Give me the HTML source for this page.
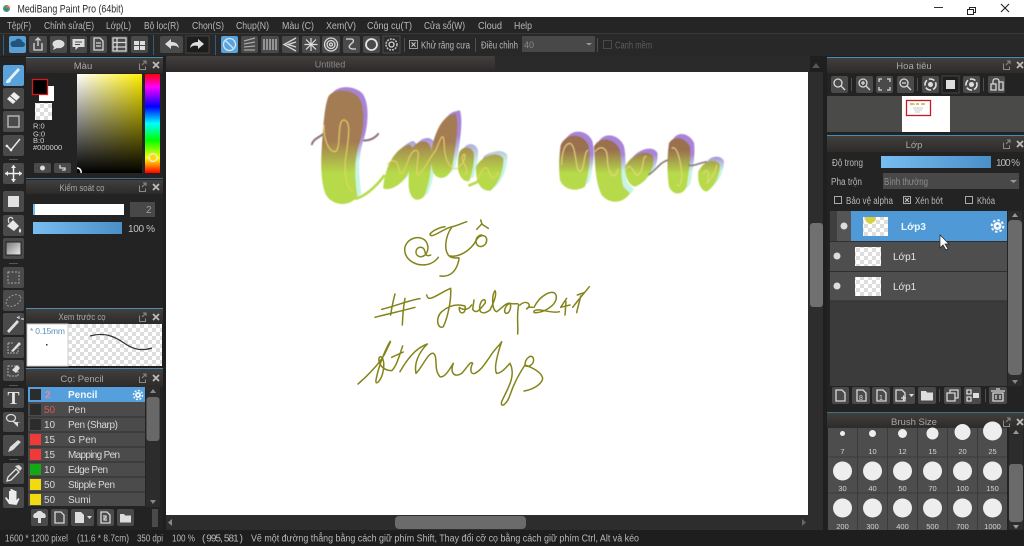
<!DOCTYPE html>
<html><head><meta charset="utf-8"><title>MediBang Paint Pro</title>
<style>
html,body{margin:0;padding:0;background:#1f1f1f;width:1024px;height:546px;overflow:hidden}
svg{display:block;filter:blur(.35px)}
text{font-family:"Liberation Sans","Noto Sans CJK SC",sans-serif;font-size:10px;fill:#b8b8b8}
.b{fill:#4a4a4a}
.i{fill:none;stroke:#d8d8d8;stroke-width:1.3}
.w{fill:#dedede}
.h{fill:#a8a8a8;text-anchor:middle;font-size:9.5px}
.r{fill:#d0d0d0;font-size:10px}
.s{fill:#d4d4d4;font-size:7.5px;text-anchor:middle}
.sep{fill:#4f4f4f}
</style></head><body>
<svg width="1024" height="546" viewBox="0 0 1024 546" xmlns="http://www.w3.org/2000/svg">
<defs>
<linearGradient id="hd" x1="0" y1="0" x2="0" y2="1"><stop offset="0" stop-color="#423f3d"/><stop offset="1" stop-color="#2d2b2a"/></linearGradient>
<linearGradient id="blue" x1="0" y1="0" x2="1" y2="0"><stop offset="0" stop-color="#77bdf0"/><stop offset="1" stop-color="#4a90c8"/></linearGradient>
<linearGradient id="sv1" x1="0" y1="0" x2="1" y2="0"><stop offset="0" stop-color="#fff"/><stop offset="1" stop-color="#ffee00"/></linearGradient>
<linearGradient id="sv2" x1="0" y1="0" x2="0" y2="1"><stop offset="0" stop-color="#000" stop-opacity="0"/><stop offset="1" stop-color="#000"/></linearGradient>
<linearGradient id="hue" x1="0" y1="0" x2="0" y2="1"><stop offset="0" stop-color="#f00"/><stop offset=".13" stop-color="#f0f"/><stop offset=".33" stop-color="#00f"/><stop offset=".5" stop-color="#0ff"/><stop offset=".67" stop-color="#0f0"/><stop offset=".85" stop-color="#ff0"/><stop offset="1" stop-color="#f00"/></linearGradient>
<linearGradient id="grad" x1="0" y1="0" x2="1" y2="1"><stop offset="0" stop-color="#777"/><stop offset="1" stop-color="#eee"/></linearGradient>
<pattern id="ck" width="8" height="8" patternUnits="userSpaceOnUse"><rect width="8" height="8" fill="#fff"/><rect width="4" height="4" fill="#dedede"/><rect x="4" y="4" width="4" height="4" fill="#dedede"/></pattern>
<linearGradient id="t1" gradientUnits="userSpaceOnUse" x1="0" y1="200" x2="0" y2="295"><stop offset="0" stop-color="#a47c52"/><stop offset="1" stop-color="#b6da48"/></linearGradient>
<linearGradient id="t2" gradientUnits="userSpaceOnUse" x1="0" y1="190" x2="0" y2="270"><stop offset="0" stop-color="#a884d8"/><stop offset="1" stop-color="#c8f4e4"/></linearGradient>
<linearGradient id="n1" gradientUnits="userSpaceOnUse" x1="0" y1="105" x2="0" y2="175"><stop offset="0" stop-color="#9a6f50"/><stop offset="1" stop-color="#b6da48"/></linearGradient>
<linearGradient id="n2" gradientUnits="userSpaceOnUse" x1="0" y1="130" x2="0" y2="180"><stop offset="0" stop-color="#a884d8"/><stop offset="1" stop-color="#c8f4e4"/></linearGradient>
<filter id="sb"><feGaussianBlur stdDeviation="1.2"/></filter>
<path id="T" d="M85 65C100 40 150 40 175 65C195 90 195 150 180 200C160 260 165 310 172 365C150 395 100 395 78 360C60 320 62 250 68 180C72 130 75 90 85 65ZM250 335C255 280 280 225 325 208C348 210 342 260 322 300C300 335 265 348 250 340ZM332 225C350 195 385 188 394 220C398 270 388 330 372 365C350 385 328 372 326 330C326 290 328 260 332 225ZM396 215C408 165 430 118 468 116C478 150 468 210 456 280C444 318 402 318 396 280C392 260 394 240 396 215ZM478 232C488 212 514 212 522 235C524 265 516 295 508 318C490 322 476 302 474 280C474 260 474 245 478 232ZM528 275C548 240 592 226 610 250C612 280 600 322 572 347C545 349 526 327 528 275Z"/>
<path id="N" d="M122 90C140 50 190 55 205 90C215 130 205 180 195 215C170 232 130 225 120 195C115 160 118 120 122 90ZM222 95C240 60 285 70 300 105C308 140 300 180 310 215L330 235C310 265 270 270 245 240C225 200 225 140 222 95ZM315 155C335 115 385 100 400 125C405 155 385 200 345 215C325 210 315 185 315 155ZM447 85C460 60 495 65 510 95C515 130 505 180 500 215C490 240 460 245 447 215C440 170 442 120 447 85ZM535 170C555 130 590 130 600 150C600 180 585 215 560 230C540 225 532 200 535 170Z"/>
</defs>

<!-- base -->
<rect width="1024" height="546" fill="#1f1f1f"/>
<rect width="1024" height="17" fill="#fff"/>
<rect y="17" width="1024" height="16" fill="#252525"/>
<rect y="33" width="1024" height="1" fill="#3a3a3a"/>
<rect y="34" width="1024" height="22" fill="#282828"/>

<!-- title bar -->
<circle cx="6.500" cy="8.500" r="3.500" fill="#3aa06a"/><path d="M6.500 5a3.500 3.500 0 0 1 3.500 3.500H6.500Z" fill="#e2703a"/><circle cx="6.500" cy="9.500" r="1.600" fill="#3a78c0"/>
<text x="17.500" y="12.500" textLength="106" lengthAdjust="spacingAndGlyphs" style="font-size:11px;fill:#2a2a2a">MediBang Paint Pro (64bit)</text>
<rect x="934" y="7" width="9" height="1" fill="#333"/>
<path d="M967.500 9.500h6v5h-6zM969.500 9.500v-2h6v5h-2" fill="none" stroke="#222" stroke-width="1"/>
<path d="M1001 4l8 8M1009 4l-8 8" stroke="#222" stroke-width="1.100"/>

<!-- menu -->
<g>
<text x="7" y="29" textLength="24" lengthAdjust="spacingAndGlyphs">Tệp(F)</text><text x="44" y="29" textLength="50" lengthAdjust="spacingAndGlyphs">Chỉnh sửa(E)</text><text x="106" y="29" textLength="25" lengthAdjust="spacingAndGlyphs">Lớp(L)</text><text x="144" y="29" textLength="35" lengthAdjust="spacingAndGlyphs">Bộ lọc(R)</text><text x="192" y="29" textLength="32" lengthAdjust="spacingAndGlyphs">Chọn(S)</text><text x="236" y="29" textLength="33" lengthAdjust="spacingAndGlyphs">Chụp(N)</text><text x="282" y="29" textLength="32" lengthAdjust="spacingAndGlyphs">Màu (C)</text><text x="326" y="29" textLength="30" lengthAdjust="spacingAndGlyphs">Xem(V)</text><text x="367" y="29" textLength="45" lengthAdjust="spacingAndGlyphs">Công cụ(T)</text><text x="424" y="29" textLength="41" lengthAdjust="spacingAndGlyphs">Cửa sổ(W)</text><text x="478" y="29" textLength="24" lengthAdjust="spacingAndGlyphs">Cloud</text><text x="514" y="29" textLength="18" lengthAdjust="spacingAndGlyphs">Help</text>
</g>

<!-- toolbar -->
<rect x="3" y="35" width="1" height="20" fill="#2f5f80"/>
<rect x="9" y="36" width="17" height="17" rx="2" fill="#5a9fd4"/>
<path d="M12.500 47h10a2.500 2.500 0 0 0 0-5 4 4 0 0 0-7.500-1 3 3 0 0 0-2.500 6Z" fill="#22557e"/>
<rect x="29" y="36" width="18" height="17" rx="2" class="b"/><path d="M34 43v7h8v-7M38 46v-8M35.500 40.500 38 38l2.500 2.500" class="i"/>
<rect x="50" y="36" width="17" height="17" rx="2" class="b"/><ellipse cx="58.500" cy="44" rx="6" ry="4.300" class="w"/><path d="M54 47l-1 3 4-2Z" class="w"/>
<rect x="70" y="36" width="17" height="17" rx="2" class="b"/><path d="M72.500 39h12v8h-6l-3 3v-3h-3Z" class="w"/><path d="M75 42h7M75 44.500h5" stroke="#4a4a4a"/>
<rect x="90" y="36" width="17" height="17" rx="2" class="b"/><path d="M94 38h6l3 3v9h-9ZM96 43h5M96 46h5" class="i"/>
<rect x="111" y="36" width="17" height="17" rx="2" class="b"/><path d="M113 38h13v13h-13ZM113 42.500h13M113 47h13M117 38v13" class="i"/>
<rect x="131" y="36" width="17" height="17" rx="2" class="b"/><path d="M134 41h5v4h-5ZM140 41h5v4h-5ZM134 46h5v4h-5ZM140 46h5v4h-5Z" class="w"/>
<rect x="153" y="35" width="1" height="20" fill="#2f5f80"/>
<rect x="160" y="36" width="23" height="17" rx="2" class="b"/><path d="M165 44l6-5v3c4 0 7 1 8 6-2-2-4-3-8-2v3Z" class="w"/>
<rect x="186" y="36" width="23" height="17" fill="#1d1d1d" stroke="#444"/><path d="M204 44l-6-5v3c-4 0-7 1-8 6 2-2 4-3 8-2v3Z" class="w"/>
<rect x="215" y="35" width="1" height="20" fill="#2f5f80"/>
<rect x="221" y="36" width="17" height="17" rx="2" fill="#5aa2dc"/><circle cx="229.500" cy="44.500" r="6" fill="none" stroke="#cfe6f7" stroke-width="1.300"/><path d="M225.500 40.500l8 8" stroke="#cfe6f7" stroke-width="1.300"/>
<rect x="241" y="36" width="17" height="17" rx="2" class="b"/><path d="M244 41l11-3M244 44l11-2M244 47l11-1M244 50l11 0" stroke="#a8a8a8" stroke-width="1.300"/>
<rect x="261" y="36" width="18" height="17" rx="2" class="b"/><path d="M264 39v11M267 39v11M270 39v11M273 39v11M276 39v11" stroke="#bbb" stroke-width="1.300"/>
<rect x="282" y="36" width="17" height="17" rx="2" class="b"/><path d="M296 38l-12 6.500 12 6.500M296 42l-8 2.500 8 2.500" class="i"/>
<rect x="302" y="36" width="18" height="17" rx="2" class="b"/><path d="M311 38v13M304.500 44.500h13M306 39.500l10 10M316 39.500l-10 10" stroke="#ddd" stroke-width="1.200"/>
<rect x="322" y="36" width="18" height="17" rx="2" class="b"/><circle cx="331" cy="44.500" r="6.500" class="i"/><circle cx="331" cy="44.500" r="4" class="i"/><circle cx="331" cy="44.500" r="1.500" class="i"/>
<rect x="343" y="36" width="17" height="17" rx="2" class="b"/><path d="M346 39h5c3 0 3 3 1 4l-2 2c-2 2 0 4 3 4h3" class="i"/>
<rect x="363" y="36" width="17" height="17" rx="2" class="b"/><circle cx="371.500" cy="44.500" r="5.500" fill="none" stroke="#e4e4e4" stroke-width="1.800"/>
<rect x="383" y="36" width="17" height="17" fill="#2c2c2c" stroke="#4a4a4a"/><circle cx="391.500" cy="44.500" r="5.500" fill="none" stroke="#bdbdbd" stroke-width="1.600" stroke-dasharray="2 1"/><circle cx="391.500" cy="44.500" r="2.500" class="i"/>
<rect x="404" y="38" width="1" height="14" class="sep"/>
<rect x="409.500" y="40.500" width="8" height="8" fill="#2b2b2b" stroke="#9a9a9a"/><path d="M411.500 42.500l4 4M415.500 42.500l-4 4" stroke="#cfcfcf"/>
<text x="421" y="48.500" textLength="49" lengthAdjust="spacingAndGlyphs">Khử răng cưa</text>
<rect x="475" y="38" width="1" height="14" class="sep"/>
<text x="481" y="48.500" textLength="37" lengthAdjust="spacingAndGlyphs">Điều chỉnh</text>
<rect x="522" y="36" width="73" height="16" rx="1" fill="#484848"/>
<text x="524" y="48" style="font-size:9px;fill:#8a8a8a">40</text>
<path d="M586 43h6l-3 2.500Z" fill="#999"/>
<rect x="597" y="38" width="1" height="14" class="sep"/>
<rect x="603.500" y="40.500" width="8" height="8" fill="none" stroke="#4a4a4a"/>
<text x="615" y="48.500" textLength="37" lengthAdjust="spacingAndGlyphs" style="fill:#5e5e5e">Canh mềm</text>

<!-- left tool strip -->
<rect x="0" y="57" width="26" height="473" fill="#232323"/>
<rect x="3" y="65" width="21" height="21" rx="2" fill="#5aa2dc"/><path d="M7 82l3-1 10-11-2-2-10 11Z" fill="#e6f2fb"/><path d="M6 83c0-3 2-5 4-4l1 2c-1 2-3 2-5 2Z" fill="#e6f2fb"/>
<rect x="3" y="88" width="21" height="21" rx="2" class="b"/><path d="M7 99l7-7 6 5-7 7Z" fill="#eee"/><path d="M10 96l6 5" stroke="#4a4a4a"/>
<rect x="3" y="111" width="21" height="21" rx="2" class="b"/><rect x="8" y="116" width="11" height="11" fill="none" stroke="#bbb" stroke-width="1.400"/>
<rect x="3" y="135" width="21" height="21" rx="2" class="b"/><path d="M6 145l5 5 9-11" fill="none" stroke="#e6e6e6" stroke-width="1.500"/><circle cx="7" cy="146" r="1.300" fill="#eee"/><circle cx="11" cy="150" r="1.300" fill="#eee"/>
<rect x="9" y="159" width="9" height="1" fill="#555"/>
<rect x="3" y="163" width="21" height="21" rx="2" class="b"/><path d="M13.500 165v17M5 173.500h17" stroke="#eee" stroke-width="1.500"/><path d="M11 168l2.500-3 2.500 3ZM11 179l2.500 3 2.500-3ZM8 171l-3 2.500 3 2.500ZM19 171l3 2.500-3 2.500Z" fill="#eee"/>
<rect x="3" y="191" width="21" height="21" rx="2" class="b"/><rect x="8" y="196" width="11" height="11" fill="#e2e2e2"/>
<rect x="3" y="215" width="21" height="21" rx="2" class="b"/><path d="M7 226l6-6 6 6-5 5Z" fill="#e6e6e6"/><path d="M9 223c-2-6 2-7 4-4" class="i"/><path d="M20 228c1 2 2 3 0 5-2-2-1-3 0-5Z" fill="#e6e6e6"/>
<rect x="3" y="238" width="21" height="21" rx="2" class="b"/><rect x="6" y="242" width="15" height="13" fill="url(#grad)" stroke="#222"/>
<rect x="9" y="263" width="9" height="1" fill="#555"/>
<rect x="3" y="267" width="21" height="21" rx="2" class="b"/><rect x="8" y="272" width="11" height="11" fill="none" stroke="#aaa" stroke-dasharray="2 1.500"/>
<rect x="3" y="290" width="21" height="21" rx="2" class="b"/><ellipse cx="13.500" cy="300.500" rx="8" ry="5" transform="rotate(-30 13.500 300.500)" fill="none" stroke="#9a9a9a" stroke-dasharray="2 1.500"/>
<rect x="3" y="313" width="21" height="22" rx="2" class="b"/><path d="M7 331l10-11 2 2-10 11Z" class="w"/><path d="M19 316v3M21 319h3M17 317l1 1" stroke="#eee"/>
<rect x="3" y="337" width="21" height="21" rx="2" class="b"/><path d="M8 343h5M8 343v10h10v-5" fill="none" stroke="#aaa" stroke-dasharray="2 1"/><path d="M11 351l8-9 2 2-8 8Z" class="w"/>
<rect x="3" y="360" width="21" height="21" rx="2" class="b"/><rect x="8" y="366" width="10" height="10" fill="none" stroke="#aaa" stroke-dasharray="2 1"/><path d="M12 370l5-5 3 3-4 5Z" class="w"/>
<rect x="9" y="385" width="9" height="1" fill="#555"/>
<rect x="3" y="388" width="21" height="20" rx="2" class="b"/><text x="13.500" y="404" text-anchor="middle" style="font-family:'Liberation Serif',serif;font-weight:bold;font-size:18px;fill:#e4e4e4">T</text>
<rect x="3" y="412" width="21" height="20" rx="2" class="b"/><ellipse cx="11" cy="418" rx="4.500" ry="3.500" class="i"/><path d="M12 421l6 6v-4l3 0Z" class="w"/>
<rect x="3" y="435" width="21" height="21" rx="2" class="b"/><path d="M8 452l2-5 8-7 3 2-8 8Z" class="w"/>
<rect x="9" y="459" width="9" height="1" fill="#555"/>
<rect x="3" y="463" width="21" height="21" rx="2" class="b"/><path d="M7 481l1-4 8-8 3 3-8 8Z" fill="none" stroke="#e4e4e4" stroke-width="1.300"/><path d="M15 466l5 5 2-3-3-3Z" class="w"/>
<rect x="3" y="487" width="21" height="21" rx="2" class="b"/><path d="M9 504l-4-6 1-1 3 3v-9h1.500v6v-8h2v8v-7h2v7v-6h2v9l2-2 1 1-3 6Z" fill="#ececec"/>

<!-- Màu -->
<rect x="26" y="57" width="137" height="122" fill="#232323"/>
<rect x="26" y="57" width="137" height="1" fill="#4a8cb8"/>
<rect x="26" y="58" width="137" height="15" fill="url(#hd)"/>
<text x="83" y="69" class="h">Màu</text>
<g id="p1"><path d="M139.500 63.500v6h6v-3M142 65l4-4M143 61h3v3" fill="none" stroke="#8a8a8a"/><path d="M153 62l6 6M159 62l-6 6" stroke="#bbb" stroke-width="1.800"/></g>
<rect x="39" y="86" width="15" height="15" fill="#fff"/>
<rect x="32.500" y="79.500" width="15" height="15" fill="#000" stroke="#d41a1a" stroke-width="1.300"/>
<rect x="35" y="103" width="17" height="17" fill="url(#ck)"/>
<text x="33" y="128.500" class="r" style="font-size:7.500px">R:0</text><text x="33" y="136.500" class="r" style="font-size:7.500px">G:0</text><text x="33" y="143" class="r" style="font-size:7.500px">B:0</text><text x="33" y="150" class="r" style="font-size:7.500px">#000000</text>
<rect x="77" y="74" width="65" height="99" fill="url(#sv1)"/><rect x="77" y="74" width="65" height="99" fill="url(#sv2)"/>
<rect x="145" y="74" width="15" height="99" fill="url(#hue)"/>
<circle cx="153" cy="157.500" r="4" fill="#ffd818" stroke="#eee" stroke-width="1.200"/>
<path d="M77 168a4 4 0 0 1 4 5" fill="none" stroke="#fff" stroke-width="1.500"/>
<rect x="34" y="163" width="17" height="10" rx="1.500" class="b"/><circle cx="42.500" cy="168" r="2.500" fill="#ddd"/>
<rect x="54" y="163" width="17" height="10" rx="1.500" class="b"/><path d="M60 165v3h5v2h-3" class="i"/>

<!-- Kiểm soát -->
<rect x="26" y="179" width="137" height="130" fill="#232323"/>
<rect x="26" y="178" width="137" height="1" fill="#3f6f90"/>
<rect x="26" y="180" width="137" height="14" fill="url(#hd)"/>
<text x="82" y="191" class="h" textLength="45" lengthAdjust="spacingAndGlyphs">Kiểm soát cọ</text>
<use href="#p1" transform="translate(0,122)"/>
<rect x="33" y="204" width="91" height="11" fill="#fff"/><rect x="33" y="204" width="2" height="11" fill="#7ab8e8"/>
<rect x="130" y="202" width="25" height="15" fill="#484848"/><text x="146" y="213" style="fill:#a0a0a0">2</text>
<rect x="33" y="222" width="89" height="12" fill="url(#blue)"/>
<text x="128" y="232" textLength="27" style="fill:#c4c4c4">100 %</text>

<!-- Xem trước -->
<rect x="26" y="308" width="137" height="1" fill="#4a8cb8"/>
<rect x="26" y="309" width="137" height="15" fill="url(#hd)"/>
<text x="82" y="320" class="h" textLength="47" lengthAdjust="spacingAndGlyphs">Xem trước cọ</text>
<use href="#p1" transform="translate(0,252)"/>
<rect x="27" y="324" width="135" height="42" fill="url(#ck)"/>
<rect x="27" y="324" width="41" height="42" fill="#fff" stroke="#ccc"/>
<text x="30" y="334" textLength="35" style="font-size:8.500px;fill:#5a90c0">* 0.15mm</text>
<rect x="46" y="344" width="1.500" height="1.500" fill="#333"/>
<path d="M90 336C104 332 114 336 124 343C134 350 142 351 152 348" fill="none" stroke="#333" stroke-width="1.200"/>

<!-- Cọ -->
<rect x="26" y="368" width="137" height="162" fill="#232323"/>
<rect x="26" y="368" width="137" height="1" fill="#4a8cb8"/>
<rect x="26" y="369" width="137" height="18" fill="url(#hd)"/>
<text x="82" y="382" class="h">Cọ: Pencil</text>
<use href="#p1" transform="translate(0,313)"/>
<g>
<rect x="28" y="387" width="117" height="15" fill="#55a0dc"/>
<rect x="28" y="402" width="117" height="104" fill="#4b4b4b"/>
<path d="M28 417h117M28 432h117M28 447h117M28 462h117M28 477h117M28 492h117" stroke="#2f2f2f"/>
<rect x="30" y="389" width="11" height="11" fill="#2c2c2c"/><rect x="30" y="404" width="11" height="11" fill="#2c2c2c"/><rect x="30" y="419" width="11" height="11" fill="#2c2c2c"/>
<rect x="30" y="434" width="11" height="11" fill="#f03a3a"/><rect x="30" y="449" width="11" height="11" fill="#f03a3a"/>
<rect x="30" y="464" width="11" height="11" fill="#14a814"/>
<rect x="30" y="479" width="11" height="11" fill="#f2da10"/><rect x="30" y="494" width="11" height="11" fill="#f2da10"/>
<text x="45" y="398" style="fill:#e88a9a;font-weight:bold">2</text><text x="68" y="398" style="font-weight:bold;fill:#f0f6fb">Pencil</text>
<text x="44" y="413" style="fill:#d85858">50</text><text x="68" y="413" style="fill:#d8d8d8">Pen</text>
<text x="44" y="428" style="fill:#d8d8d8">10</text><text x="68" y="428" textLength="50" style="fill:#d8d8d8">Pen (Sharp)</text>
<text x="44" y="443" style="fill:#d8d8d8">15</text><text x="68" y="443" style="fill:#d8d8d8">G Pen</text>
<text x="44" y="458" style="fill:#d8d8d8">15</text><text x="68" y="458" textLength="52" style="fill:#d8d8d8">Mapping Pen</text>
<text x="44" y="473" style="fill:#d8d8d8">10</text><text x="68" y="473" textLength="40" style="fill:#d8d8d8">Edge Pen</text>
<text x="44" y="488" style="fill:#d8d8d8">50</text><text x="68" y="488" textLength="47" style="fill:#d8d8d8">Stipple Pen</text>
<text x="44" y="503" style="fill:#d8d8d8">50</text><text x="68" y="503" style="fill:#d8d8d8">Sumi</text>
</g>
<circle cx="138" cy="395" r="3" fill="#eef6fc"/><circle cx="138" cy="395" r="4.500" fill="none" stroke="#eef6fc" stroke-width="1.500" stroke-dasharray="2 1.500"/><circle cx="138" cy="395" r="1.100" fill="#55a0dc"/>
<rect x="146" y="387" width="14" height="120" fill="#2c2c2c"/><path d="M150 393l3-4 3 4Z" fill="#888"/><path d="M150 500l3 4 3-4Z" fill="#888"/>
<rect x="146.500" y="397" width="13" height="44" rx="3" fill="#686868"/>
<rect x="31" y="509" width="17" height="17" rx="2" class="b"/><path d="M34 518a3 3 0 0 1 2-5 4 4 0 0 1 7 0 3 3 0 0 1 2 5h-4v5h-3v-5Z" class="w"/>
<rect x="51" y="509" width="17" height="17" rx="2" class="b"/><path d="M55 512h6l3 3v8h-9Z" class="i"/>
<rect x="71" y="509" width="23" height="17" rx="2" class="b"/><path d="M75 512h6l3 3v8h-9Z" class="w"/><path d="M87 516h5l-2.500 3Z" class="w"/>
<rect x="97" y="509" width="17" height="17" rx="2" class="b"/><path d="M101 512h6l3 3v8h-9ZM103 516h3v2h-2v2h3" class="i"/>
<rect x="117" y="509" width="17" height="17" rx="2" class="b"/><path d="M120 514h4l1 1.500h6v7h-11Z" class="w"/>
<rect x="152" y="509" width="6" height="18" fill="#4a4a4a"/>

<!-- Canvas -->
<rect x="163" y="56" width="664" height="474" fill="#1f1f1f"/>
<rect x="166" y="56" width="644" height="16" fill="#2a2a2a"/>
<rect x="166" y="56" width="329" height="15" rx="2" fill="url(#hd)"/>
<text x="330" y="67.500" text-anchor="middle" style="font-size:9px;fill:#8c8c8c">Untitled</text>
<rect x="166" y="72" width="642" height="443" fill="#fff"/>
<rect x="166" y="515" width="642" height="15" fill="#2d2d2d"/>
<path d="M172 519v7l-4-3.500Z" fill="#888"/><path d="M802 519v7l4-3.500Z" fill="#666"/>
<rect x="395" y="516" width="131" height="13" rx="4" fill="#6b6b6b"/>
<rect x="808" y="72" width="15" height="458" fill="#2d2d2d"/>
<rect x="810" y="223" width="13" height="84" rx="3" fill="#707070"/>
<path d="M812 68h8l-4-5Z" fill="#555"/>

<!-- Take -->
<g transform="translate(300,75) scale(.33333)" filter="url(#sb)">
<path d="M35 210C40 190 55 190 72 175M185 195C205 200 225 190 236 175" fill="none" stroke="#8a6a7a" stroke-width="6"/>
<path d="M440 130C465 100 485 110 475 150C470 190 465 200 450 240" fill="none" stroke="#a884d8" stroke-width="5"/>
<path d="M550 250C575 225 605 230 605 255C603 270 598 285 590 300" fill="none" stroke="#a884d8" stroke-width="4"/>
<use href="#T" transform="translate(12,-10)" fill="url(#t2)"/>
<use href="#T" fill="url(#t1)"/>
<path d="M165 372C200 362 230 332 254 300M505 332C520 327 530 322 545 314" fill="none" stroke="#b6da48" stroke-width="8"/>
<path d="M72 150C70 190 85 230 105 230C125 225 110 140 130 135C155 135 145 190 140 230C130 280 135 340 160 350M262 270C275 250 290 255 295 275C300 305 310 300 325 255C335 225 355 215 355 240C350 280 345 320 365 290C380 270 395 240 408 225C425 180 430 175 432 200C433 240 440 270 460 280C470 290 495 260 495 245C498 230 480 240 490 262C500 280 505 290 495 300M530 315C545 290 555 265 565 285C570 310 585 320 595 290" fill="none" stroke="#e8d468" stroke-width="3"/>
</g>

<!-- Note -->
<g transform="translate(520,115) scale(.33333)" filter="url(#sb)">
<use href="#N" transform="translate(12,-12)" fill="url(#n2)"/>
<use href="#N" fill="url(#n1)"/>
<path d="M385 180C410 165 420 140 445 135M505 150C520 155 535 145 560 140" fill="none" stroke="#8a7a78" stroke-width="5"/>
<path d="M125 150C125 110 135 85 150 85C170 90 165 170 180 170C195 165 190 110 205 105M225 110C240 90 262 95 262 130C262 175 285 205 295 160M318 165C330 130 345 190 355 180C375 160 365 120 380 125M455 100C470 90 480 130 485 170C488 210 475 215 470 210M550 175C565 150 570 190 560 205C575 195 590 160 590 150" fill="none" stroke="#e8d880" stroke-width="3"/>
</g>

<!-- handwriting -->
<g transform="translate(350,220) scale(.33333)" fill="none" stroke="#84841a" stroke-width="4.500" stroke-linecap="round" stroke-linejoin="round" style="filter:blur(.3px)">
<path d="M265 112C240 145 190 140 170 110C150 75 185 45 215 55C235 62 240 90 225 105C210 118 192 105 200 88C208 78 222 80 225 95C226 105 232 110 242 105"/>
<path d="M240 42C242 58 275 30 300 22C320 18 335 10 350 5M240 42C250 30 270 22 285 20M305 22C285 50 280 95 300 110C325 122 332 100 324 130C316 155 300 172 270 168M300 108C325 112 360 95 378 62"/>
<path d="M378 62C388 42 410 42 410 60C410 82 380 88 378 65C377 55 385 45 395 45M380 28L395 12L415 25M392 0L396 12"/>
<path d="M75 292C120 280 160 272 195 262M95 268C130 260 180 240 210 236M135 222C130 240 125 265 122 285M165 235C160 260 158 290 157 315"/>
<path d="M230 225C235 250 262 222 302 205C304 240 294 290 280 320C264 330 254 295 275 275C295 258 318 250 345 258C350 285 325 285 328 262C340 272 355 270 365 255M372 240L368 268C380 285 392 265 405 250C410 235 395 235 390 255C385 280 400 285 420 270C435 240 440 220 435 212C425 225 425 270 440 275C450 270 465 250 475 250C487 245 482 280 470 280C458 280 465 255 480 250C495 255 510 245 505 260C500 290 505 320 503 342M510 255C525 240 545 250 535 262C525 275 530 258 548 262"/>
<path d="M552 262C570 225 610 205 618 225C625 250 590 275 560 278C545 280 550 268 570 270C590 272 610 280 628 275M650 235L632 262L660 255M648 245L645 285M668 262C685 240 702 220 718 200M682 225L702 218M692 228C688 250 682 265 680 278"/>
<path d="M24 492C50 470 90 430 105 400C115 378 125 360 120 365C105 390 85 440 78 480C75 500 95 482 100 450C105 420 95 405 88 412C82 425 95 452 125 452C140 440 150 400 158 378M125 412L160 396M150 455C170 420 195 385 232 372C205 398 192 432 198 460C215 445 235 395 250 400C265 410 250 450 270 470C285 475 302 442 310 430C300 455 310 475 335 460C350 445 362 420 368 430C360 445 360 465 375 460C395 450 405 430 420 410C435 385 450 375 455 365C445 395 430 445 440 460C455 460 470 440 480 430C500 470 470 510 455 545C450 565 470 555 480 525C490 495 505 465 525 435C525 415 545 400 550 415C555 435 530 445 525 435C540 440 575 455 578 475C575 495 545 510 522 513"/>
</g>

<!-- Right: Hoa tiêu -->
<rect x="827" y="57" width="197" height="355" fill="#232323"/>
<rect x="827" y="57" width="197" height="1" fill="#4a8cb8"/>
<rect x="827" y="58" width="197" height="15" fill="url(#hd)"/>
<text x="914" y="69" class="h">Hoa tiêu</text>
<use href="#p1" transform="translate(864,0)"/>
<rect x="831" y="76" width="17" height="17" rx="2" class="b"/><circle cx="838" cy="83" r="4" class="i"/><path d="M841 86l4 4" class="i"/>
<rect x="851" y="78" width="1" height="13" class="sep"/>
<rect x="856" y="76" width="17" height="17" rx="2" class="b"/><circle cx="863" cy="83" r="4" class="i"/><path d="M866 86l4 4M861 83h4M863 81v4" class="i"/>
<rect x="876" y="76" width="17" height="17" rx="2" class="b"/><path d="M879 82v-3h3M887 79h3v3M890 87v3h-3M882 90h-3v-3" class="i"/>
<rect x="897" y="76" width="17" height="17" rx="2" class="b"/><circle cx="904" cy="83" r="4" class="i"/><path d="M907 86l4 4M902 83h4" class="i"/>
<rect x="917" y="78" width="1" height="13" class="sep"/>
<rect x="922" y="76" width="17" height="17" rx="2" class="b"/><circle cx="930.500" cy="84.500" r="5.500" fill="none" stroke="#e0e0e0" stroke-width="1.600" stroke-dasharray="6 2"/><circle cx="930.500" cy="84.500" r="2.500" class="w"/>
<rect x="942" y="76" width="17" height="17" fill="#1f1f1f" stroke="#444"/><path d="M946 80h9v9h-9Z" class="w"/>
<rect x="963" y="76" width="17" height="17" rx="2" class="b"/><circle cx="971.500" cy="84.500" r="5.500" fill="none" stroke="#e0e0e0" stroke-width="1.600" stroke-dasharray="6 2"/><circle cx="971.500" cy="84.500" r="2.500" class="w"/>
<rect x="983" y="78" width="1" height="13" class="sep"/>
<rect x="988" y="76" width="17" height="17" rx="2" class="b"/><path d="M991 84h5v6h-5ZM999 82h4v8h-4ZM993 84v-3c0-3 6-3 6 0v1" class="i"/>
<rect x="827" y="96" width="197" height="36" fill="#4a4a48"/>
<rect x="902" y="96" width="48" height="36" fill="#fff"/>
<rect x="906.500" y="100.500" width="24" height="15" fill="none" stroke="#c81a24" stroke-width="1.300"/>
<path d="M910 103h4l1 2h-5ZM916 103h3v2h-3ZM921 103h4v2h-4Z" fill="#c8c870"/><path d="M913 108h10M914 110h8M915 112h5" stroke="#bbb" stroke-width=".7"/>

<!-- Lớp -->
<rect x="827" y="135" width="197" height="1" fill="#4a8cb8"/>
<rect x="827" y="136" width="197" height="16" fill="url(#hd)"/>
<text x="914" y="148" class="h">Lớp</text>
<use href="#p1" transform="translate(864,79)"/>
<text x="832" y="166" textLength="31" lengthAdjust="spacingAndGlyphs">Độ trong</text>
<rect x="881" y="156" width="110" height="12" fill="url(#blue)"/>
<text x="996" y="166" textLength="24">100 %</text>
<text x="831" y="185" textLength="31" lengthAdjust="spacingAndGlyphs">Pha trộn</text>
<rect x="883" y="173" width="136" height="16" fill="#484848"/>
<text x="884" y="185" textLength="44" lengthAdjust="spacingAndGlyphs" style="fill:#8e8e8e">Bình thường</text>
<path d="M1010 180h7l-3.500 3Z" fill="#999"/>
<rect x="834.500" y="196.500" width="7" height="7" fill="none" stroke="#aaa"/>
<text x="846" y="204" textLength="47" lengthAdjust="spacingAndGlyphs">Bảo vệ alpha</text>
<rect x="903.500" y="196.500" width="7" height="7" fill="none" stroke="#aaa"/><path d="M905 198l4 4M909 198l-4 4" stroke="#ccc"/>
<text x="915" y="204" textLength="28" lengthAdjust="spacingAndGlyphs">Xén bớt</text>
<rect x="965.500" y="196.500" width="7" height="7" fill="none" stroke="#aaa"/>
<text x="977" y="204" textLength="18" lengthAdjust="spacingAndGlyphs">Khóa</text>

<rect x="830" y="211" width="177" height="175" fill="#3b3b3b"/>
<rect x="830" y="211" width="10" height="30" fill="#3f3f3f"/>
<rect x="837" y="211" width="14" height="30" fill="#555"/>
<rect x="851" y="211" width="156" height="30" fill="#4f9ad6"/>
<circle cx="844" cy="226" r="3.500" fill="#ddd"/>
<rect x="863" y="217" width="25" height="19" fill="url(#ck)"/><path d="M865 217h11l-1 4-4 3-5-2Z" fill="#d8d040"/>
<text x="901" y="230" style="font-weight:bold;fill:#eef6fc">Lớp3</text>
<circle cx="997.500" cy="226" r="4" fill="#f2f8fc"/><circle cx="997.500" cy="226" r="5.800" fill="none" stroke="#f2f8fc" stroke-width="2" stroke-dasharray="2.500 2"/><circle cx="997.500" cy="226" r="1.300" fill="#4f9ad6"/>
<rect x="830" y="241" width="177" height="30" fill="#4e4e4e"/><rect x="830" y="271" width="177" height="30" fill="#4e4e4e"/>
<path d="M830 241.500h177M830 271.500h177M830 301h177" stroke="#2f2f2f"/>
<circle cx="837" cy="256" r="3.500" fill="#ddd"/><rect x="855" y="247" width="26" height="19" fill="url(#ck)"/><text x="893" y="260" style="fill:#e6e6e6">Lớp1</text>
<circle cx="837" cy="286" r="3.500" fill="#ddd"/><rect x="855" y="277" width="26" height="19" fill="url(#ck)"/><text x="893" y="290" style="fill:#e6e6e6">Lớp1</text>
<rect x="1008" y="211" width="14" height="175" fill="#2c2c2c"/><path d="M1012 217l3-4 3 4Z" fill="#999"/>
<rect x="1008" y="220" width="14" height="155" rx="4" fill="#6a6a6a"/><path d="M1012 380l3 4 3-4Z" fill="#888"/>
<path d="M940 235v13l3-3 3 5 2-1-3-5h4Z" fill="#fff" stroke="#222" stroke-width=".7"/>

<!-- layer buttons -->
<rect x="832" y="387" width="17" height="17" rx="2" class="b"/><path d="M836 390h6l3 3v8h-9Z" class="i"/>
<rect x="852" y="387" width="18" height="17" rx="2" class="b"/><path d="M857 390h6l3 3v8h-9Z" class="i"/><text x="861" y="400" text-anchor="middle" style="font-size:7px;fill:#ddd">8</text>
<rect x="872" y="387" width="18" height="17" rx="2" class="b"/><path d="M877 390h6l3 3v8h-9Z" class="i"/><text x="881" y="400" text-anchor="middle" style="font-size:7px;fill:#ddd">1</text>
<rect x="893" y="387" width="22" height="17" rx="2" class="b"/><path d="M896 390h6l3 3v8h-9ZM901 398h5M903.500 395.500v5" class="i"/><path d="M909 394h5l-2.500 3Z" class="w"/>
<rect x="918" y="387" width="18" height="17" rx="2" class="b"/><path d="M921 391h5l1 1.500h6v8h-12Z" class="w"/>
<rect x="939" y="389" width="1" height="13" class="sep"/>
<rect x="944" y="387" width="17" height="17" rx="2" class="b"/><path d="M947 393h8v8h-8ZM950 393v-3h8v8h-3" class="i"/>
<rect x="964" y="387" width="17" height="17" rx="2" class="b"/><path d="M967 390h4v4h-4ZM967 397h4v4h-4Z" class="i"/><rect x="973" y="393" width="6" height="5" class="w"/>
<rect x="985" y="389" width="1" height="13" class="sep"/>
<rect x="989" y="387" width="18" height="17" rx="2" class="b"/><path d="M993 393h10v8h-10ZM991 391h14M996 389h4M996 395v4M1000 395v4" class="i"/>

<!-- Brush size -->
<rect x="827" y="412" width="197" height="118" fill="#232323"/>
<rect x="827" y="412" width="197" height="1" fill="#3f6f90"/>
<rect x="827" y="413" width="197" height="15" fill="url(#hd)"/>
<text x="914" y="425" class="h">Brush Size</text>
<use href="#p1" transform="translate(864,357)"/>
<svg x="828" y="428" width="179" height="102" viewBox="828 428 179 102">
<rect x="828" y="428" width="179" height="102" fill="#4d4d4d"/>
<path d="M828 457h179M828 493h179M857.500 428v102M887.500 428v102M917.500 428v102M947.500 428v102M977.500 428v102" stroke="#3a3a3a"/>
<g fill="#eee"><circle cx="842.500" cy="433.500" r="2.500"/><circle cx="872.500" cy="433.500" r="3.500"/><circle cx="902.500" cy="433.500" r="4.500"/><circle cx="932.500" cy="433.500" r="6"/><circle cx="962.500" cy="432" r="8"/><circle cx="992.500" cy="431" r="9.500"/>
<circle cx="842.500" cy="471" r="9.500"/><circle cx="872.500" cy="471" r="9.500"/><circle cx="902.500" cy="471" r="9.500"/><circle cx="932.500" cy="471" r="9.500"/><circle cx="962.500" cy="471" r="9.500"/><circle cx="992.500" cy="471" r="9.500"/>
<circle cx="842.500" cy="508" r="9.500"/><circle cx="872.500" cy="508" r="9.500"/><circle cx="902.500" cy="508" r="9.500"/><circle cx="932.500" cy="508" r="9.500"/><circle cx="962.500" cy="508" r="9.500"/><circle cx="992.500" cy="508" r="9.500"/></g>
<text x="842.500" y="454" class="s">7</text><text x="872.500" y="454" class="s">10</text><text x="902.500" y="454" class="s">12</text><text x="932.500" y="454" class="s">15</text><text x="962.500" y="454" class="s">20</text><text x="992.500" y="454" class="s">25</text>
<text x="842.500" y="491" class="s">30</text><text x="872.500" y="491" class="s">40</text><text x="902.500" y="491" class="s">50</text><text x="932.500" y="491" class="s">70</text><text x="962.500" y="491" class="s">100</text><text x="992.500" y="491" class="s">150</text>
<text x="842.500" y="529" class="s">200</text><text x="872.500" y="529" class="s">300</text><text x="902.500" y="529" class="s">400</text><text x="932.500" y="529" class="s">500</text><text x="962.500" y="529" class="s">700</text><text x="992.500" y="529" class="s">1000</text>
</svg>
<rect x="1009" y="428" width="14" height="102" fill="#2c2c2c"/><path d="M1013 434l3-4 3 4Z" fill="#999"/><path d="M1013 525l3 4 3-4Z" fill="#999"/>
<rect x="1009" y="464" width="14" height="58" rx="3" fill="#6a6a6a"/>

<!-- status -->
<rect y="530" width="1024" height="16" fill="#1e1e1e"/>
<text x="5" y="541.500" textLength="63" lengthAdjust="spacingAndGlyphs">1600 * 1200 pixel</text>
<text x="77" y="541.500" textLength="52" lengthAdjust="spacingAndGlyphs">(11.6 * 8.7cm)</text>
<text x="137" y="541.500" textLength="26" lengthAdjust="spacingAndGlyphs">350 dpi</text>
<text x="172" y="541.500" textLength="23" lengthAdjust="spacingAndGlyphs">100 %</text>
<text x="202" y="541.500" textLength="41">( 995, 581 )</text>
<text x="251" y="541.500" textLength="388" lengthAdjust="spacingAndGlyphs">Vẽ một đường thẳng bằng cách giữ phím Shift, Thay đổi cỡ cọ bằng cách giữ phím Ctrl, Alt và kéo</text>
</svg>
</body></html>
